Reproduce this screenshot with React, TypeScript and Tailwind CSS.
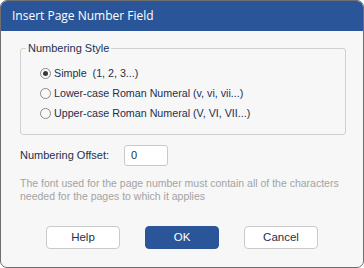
const FONT = "font-['Liberation_Sans',Arial,sans-serif]"

const OPTIONS = [
  { label: 'Simple  (1, 2, 3...)', checked: true },
  { label: 'Lower-case Roman Numeral (v, vi, vii...)', checked: false },
  { label: 'Upper-case Roman Numeral (V, VI, VII...)', checked: false },
]

function Radio({ checked }: { checked: boolean }) {
  return (
    <span className="w-[11px] h-[11px] rounded-full border border-[#8a8a8a] bg-[#fafafa] flex items-center justify-center flex-shrink-0">
      {checked && <span className="w-[5px] h-[5px] rounded-full bg-[#3a3a3a]" />}
    </span>
  )
}

export default function App() {
  return (
    <div className={`w-[364px] h-[268px] border border-[#6f6f6f] rounded-[7px] overflow-hidden flex flex-col bg-[#f7f7f7] ${FONT}`}>
      <div className="h-[30px] bg-[#2a5699] flex items-center pl-[11px] flex-shrink-0">
        <span className="text-white text-[12px] font-['Open_Sans',sans-serif]">Insert Page Number Field</span>
      </div>
      <div className="flex flex-col px-[19px]">
        <fieldset className="mt-[10px] border border-[#cfcfcf] rounded-[3px] pb-[11px] w-[326px]">
          <legend className="ml-[5px] px-[2px] text-[11px] leading-[14px] text-[#23304d]">
            Numbering Style
          </legend>
          <div className="flex flex-col pt-[8px] pl-[19px]">
            {OPTIONS.map((o) => (
              <div key={o.label} className="h-[20px] flex items-center gap-[3px]">
                <Radio checked={o.checked} />
                <span className="text-[10.7px] text-[#23304d] whitespace-pre">{o.label}</span>
              </div>
            ))}
          </div>
        </fieldset>
        <div className="mt-[10px] flex items-center">
          <span className="w-[104px] text-[11px] text-[#23304d]">Numbering Offset:</span>
          <div className="w-[44px] h-[21px] bg-white border border-[#c9c9c9] rounded-[3px] flex items-center pl-[6px] text-[11px] text-[#23304d]">
            0
          </div>
        </div>
        <p className="mt-[11px] text-[10.5px] leading-[13px] text-[#a3a3a3]">
          The font used for the page number must contain all of the characters needed for the pages to which it applies
        </p>
        <div className="mt-[23px] flex gap-[25px] pl-[26px]">
          <button className="w-[74px] h-[23px] bg-white border border-[#cacaca] rounded-[4px] text-[11.5px] text-[#23304d]">Help</button>
          <button className="w-[74px] h-[23px] bg-[#2a5699] border border-[#2a5699] rounded-[4px] text-[11.5px] text-white">OK</button>
          <button className="w-[74px] h-[23px] bg-white border border-[#cacaca] rounded-[4px] text-[11.5px] text-[#23304d]">Cancel</button>
        </div>
      </div>
    </div>
  )
}
